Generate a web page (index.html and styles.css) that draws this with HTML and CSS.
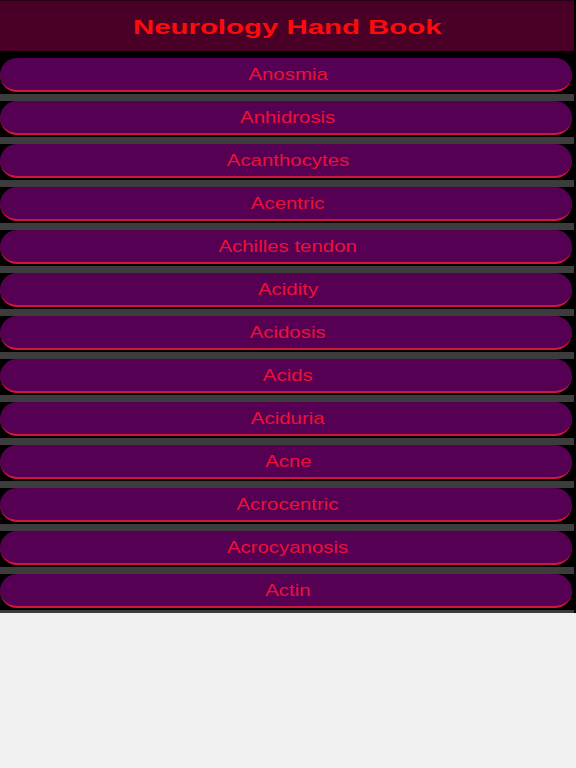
FILE: index.html
```html
<!DOCTYPE html>
<html>
<head>
<meta charset="utf-8">
<link rel="stylesheet" href="styles.css">
</head>
<body>
<div class="app">
  <header class="header"><span class="title">Neurology Hand Book</span></header>
  <ul class="list">
    <li class="row"><a class="pill"><span class="label">Anosmia</span></a></li>
    <li class="row"><a class="pill"><span class="label">Anhidrosis</span></a></li>
    <li class="row"><a class="pill"><span class="label">Acanthocytes</span></a></li>
    <li class="row"><a class="pill"><span class="label">Acentric</span></a></li>
    <li class="row"><a class="pill"><span class="label">Achilles tendon</span></a></li>
    <li class="row"><a class="pill"><span class="label">Acidity</span></a></li>
    <li class="row"><a class="pill"><span class="label">Acidosis</span></a></li>
    <li class="row"><a class="pill"><span class="label">Acids</span></a></li>
    <li class="row"><a class="pill"><span class="label">Aciduria</span></a></li>
    <li class="row"><a class="pill"><span class="label">Acne</span></a></li>
    <li class="row"><a class="pill"><span class="label">Acrocentric</span></a></li>
    <li class="row"><a class="pill"><span class="label">Acrocyanosis</span></a></li>
    <li class="row"><a class="pill"><span class="label">Actin</span></a></li>
  </ul>
</div>
</body>
</html>
```
FILE: styles.css
```css
html, body {
  margin: 0;
  padding: 0;
  background: #f0f0f0;
}
.app {
  width: 574px;
  border-right: 2px solid #000;
  background: #000;
  font-family: "Liberation Sans", Arial, sans-serif;
}
.header {
  height: 51px;
  background: #4a0026;
  display: flex;
  align-items: center;
  justify-content: center;
  box-sizing: border-box;
  border-top: 1px solid #2a0014;
}
.title {
  display: inline-block;
  color: #ff0a0a;
  font-weight: bold;
  font-size: 21px;
  transform: scaleX(1.4);
  margin-top: 1px;
}
.list {
  list-style: none;
  margin: 0;
  padding: 0 0 3px 0;
  background: #3c3c3c;
}
.row {
  margin-top: 7px;
  height: 36px;
  background: #000;
}
.pill {
  display: flex;
  align-items: center;
  justify-content: center;
  width: 572px;
  height: 34px;
  box-sizing: border-box;
  padding-left: 4px;
  background: #560054;
  border-bottom: 2px solid #d0163c;
  border-radius: 17px;
}
.label {
  display: inline-block;
  color: #ec1038;
  font-size: 17px;
  transform: scaleX(1.2);
  margin-top: 2px;
}
```
